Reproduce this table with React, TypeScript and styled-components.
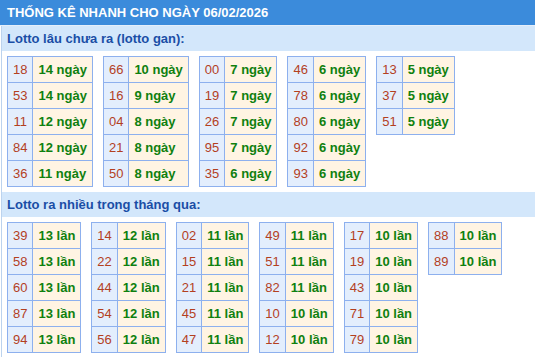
import React from "react";
import styled, { createGlobalStyle } from "styled-components";

const Global = createGlobalStyle`
  html, body { margin: 0; padding: 0; background: #ffffff; }
  body { font-family: "Liberation Sans", Arial, sans-serif; }
`;

const Page = styled.div`
  width: 560px;
`;

const TopBar = styled.div`
  height: 25px;
  line-height: 25px;
  background: #3b8bdb;
  color: #ffffff;
  font-weight: bold;
  font-size: 13px;
  padding-left: 7px;
  border-bottom: 1px solid #e4eefa;
  white-space: nowrap;
`;

const Box = styled.div`
  margin-left: 1px;
  border-left: 1px solid #bcd3ee;
`;

const SectionTitle = styled.div`
  height: 25px;
  line-height: 25px;
  background: #d3e7fb;
  color: #1a4ea6;
  font-weight: bold;
  font-size: 13px;
  padding-left: 5px;
`;

const Tables = styled.div`
  display: flex;
  align-items: flex-start;
  gap: 10px;
  padding: 5px;
`;

const Table = styled.table`
  border-collapse: collapse;
  font-size: 13px;
`;

const NumCell = styled.td`
  border: 1px solid #8db0ee;
  background: #e3eefd;
  color: #b3401f;
  padding: 0 5px;
  line-height: 25px;
  text-align: center;
`;

const ValCell = styled.td`
  border: 1px solid #8db0ee;
  background: #fff4e3;
  color: #0f800f;
  font-weight: bold;
  padding: 0 5px;
  line-height: 25px;
  text-align: left;
  white-space: nowrap;
`;

type Row = [string, number];

const gan: Row[][] = [
  [["18", 14], ["53", 14], ["11", 12], ["84", 12], ["36", 11]],
  [["66", 10], ["16", 9], ["04", 8], ["21", 8], ["50", 8]],
  [["00", 7], ["19", 7], ["26", 7], ["95", 7], ["35", 6]],
  [["46", 6], ["78", 6], ["80", 6], ["92", 6], ["93", 6]],
  [["13", 5], ["37", 5], ["51", 5]],
];

const nhieu: Row[][] = [
  [["39", 13], ["58", 13], ["60", 13], ["87", 13], ["94", 13]],
  [["14", 12], ["22", 12], ["44", 12], ["54", 12], ["56", 12]],
  [["02", 11], ["15", 11], ["21", 11], ["45", 11], ["47", 11]],
  [["49", 11], ["51", 11], ["82", 11], ["10", 10], ["12", 10]],
  [["17", 10], ["19", 10], ["43", 10], ["71", 10], ["79", 10]],
  [["88", 10], ["89", 10]],
];

function Group({ data, unit }: { data: Row[][]; unit: string }) {
  return (
    <Tables>
      {data.map((t, i) => (
        <Table key={i}>
          <tbody>
            {t.map(([n, v]) => (
              <tr key={n}>
                <NumCell>{n}</NumCell>
                <ValCell>
                  {v} {unit}
                </ValCell>
              </tr>
            ))}
          </tbody>
        </Table>
      ))}
    </Tables>
  );
}

export default function App() {
  return (
    <Page>
      <Global />
      <TopBar>THỐNG KÊ NHANH CHO NGÀY 06/02/2026</TopBar>
      <Box>
        <SectionTitle>Lotto lâu chưa ra (lotto gan):</SectionTitle>
        <Group data={gan} unit="ngày" />
        <SectionTitle>Lotto ra nhiều trong tháng qua:</SectionTitle>
        <Group data={nhieu} unit="lần" />
      </Box>
    </Page>
  );
}
